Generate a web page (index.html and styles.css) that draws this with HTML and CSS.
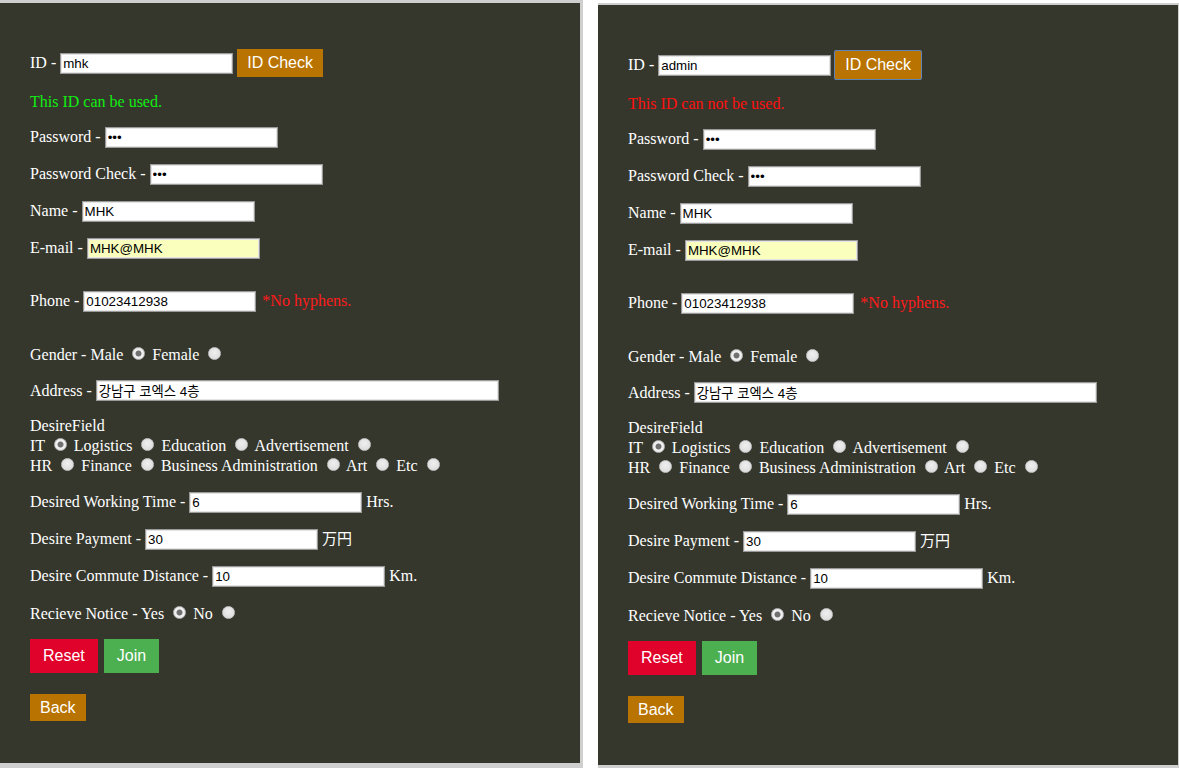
FILE: index.html
```html
<!DOCTYPE html>
<html lang="en">
<head>
<meta charset="utf-8">
<title>Join</title>
<link rel="stylesheet" href="styles.css">
</head>
<body>
<div class="screens">
  <section class="panel panel-left">
    <div class="row">ID - <input class="txt" type="text" value="mhk"> <button class="btn btn-amber btn-check">ID Check</button></div>
    <div class="row msg ok">This ID can be used.</div>
    <div class="row">Password - <input class="txt" type="password" value="abc"></div>
    <div class="row">Password Check - <input class="txt" type="password" value="abc"></div>
    <div class="row">Name - <input class="txt" type="text" value="MHK"></div>
    <div class="row">E-mail - <input class="txt auto" type="text" value="MHK@MHK"></div>
    <div class="row gap-phone">Phone - <input class="txt" type="text" value="01023412938"> <span class="note">*No hyphens.</span></div>
    <div class="row gap-gender">Gender - Male <input type="radio" name="g1" checked> Female <input type="radio" name="g1"></div>
    <div class="row">Address - <input class="txt wide" type="text" value="강남구 코엑스 4층"></div>
    <div class="row field">DesireField<br>IT <input type="radio" name="f1" checked> Logistics <input type="radio" name="f1"> Education <input type="radio" name="f1"> Advertisement <input type="radio" name="f1"><br>HR <input type="radio" name="f1"> Finance <input type="radio" name="f1"> Business Administration <input type="radio" name="f1"> Art <input type="radio" name="f1"> Etc <input type="radio" name="f1"></div>
    <div class="row work">Desired Working Time - <input class="txt" type="text" value="6"> Hrs.</div>
    <div class="row">Desire Payment - <input class="txt" type="text" value="30"> <span class="cjk">万円</span></div>
    <div class="row">Desire Commute Distance - <input class="txt" type="text" value="10"> Km.</div>
    <div class="row notice">Recieve Notice - Yes <input type="radio" name="n1" checked> No <input type="radio" name="n1"></div>
    <div class="row actions"><button class="btn btn-red">Reset</button><button class="btn btn-green">Join</button></div>
    <div class="row back-row"><button class="btn btn-amber btn-back">Back</button></div>
  </section>
  <section class="panel panel-right">
    <div class="row">ID - <input class="txt" type="text" value="admin"> <button class="btn btn-amber btn-check focused">ID Check</button></div>
    <div class="row msg bad">This ID can not be used.</div>
    <div class="row">Password - <input class="txt" type="password" value="abc"></div>
    <div class="row">Password Check - <input class="txt" type="password" value="abc"></div>
    <div class="row">Name - <input class="txt" type="text" value="MHK"></div>
    <div class="row">E-mail - <input class="txt auto" type="text" value="MHK@MHK"></div>
    <div class="row gap-phone">Phone - <input class="txt" type="text" value="01023412938"> <span class="note">*No hyphens.</span></div>
    <div class="row gap-gender">Gender - Male <input type="radio" name="g2" checked> Female <input type="radio" name="g2"></div>
    <div class="row">Address - <input class="txt wide" type="text" value="강남구 코엑스 4층"></div>
    <div class="row field">DesireField<br>IT <input type="radio" name="f2" checked> Logistics <input type="radio" name="f2"> Education <input type="radio" name="f2"> Advertisement <input type="radio" name="f2"><br>HR <input type="radio" name="f2"> Finance <input type="radio" name="f2"> Business Administration <input type="radio" name="f2"> Art <input type="radio" name="f2"> Etc <input type="radio" name="f2"></div>
    <div class="row work">Desired Working Time - <input class="txt" type="text" value="6"> Hrs.</div>
    <div class="row">Desire Payment - <input class="txt" type="text" value="30"> <span class="cjk">万円</span></div>
    <div class="row">Desire Commute Distance - <input class="txt" type="text" value="10"> Km.</div>
    <div class="row notice">Recieve Notice - Yes <input type="radio" name="n2" checked> No <input type="radio" name="n2"></div>
    <div class="row actions"><button class="btn btn-red">Reset</button><button class="btn btn-green">Join</button></div>
    <div class="row back-row"><button class="btn btn-amber btn-back">Back</button></div>
  </section>
</div>
</body>
</html>
```
FILE: styles.css
```css
html, body {
  margin: 0;
  padding: 0;
  background: #ffffff;
  overflow: hidden;
}

body {
  font-family: "Liberation Serif", "Times New Roman", serif;
  font-size: 16px;
  color: #ffffff;
}

.screens {
  display: flex;
  gap: 15px;
  height: 768px;
  align-items: flex-start;
}

.panel {
  box-sizing: border-box;
  background: #35372d;
  padding: 30px 30px 0 30px;
  flex: none;
}

.panel-left {
  width: 583px;
  height: 768px;
  border-top: 3px solid #cfcfcf;
  border-right: 3px solid #cfcfcf;
  border-bottom: 5px solid #cfcfcf;
}

.panel-right {
  width: 581px;
  height: 765px;
  margin-top: 3px;
  border-top: 2px solid #cfcfcf;
  border-right: 1px solid #cfcfcf;
  border-bottom: 3px solid #cfcfcf;
}

.row {
  margin: 16px 0;
}

.gap-phone {
  margin-top: 32px;
}

.gap-gender {
  margin-top: 32px;
}

.field {
  margin-top: 15px;
}

.work {
  margin-top: 17px;
}

.notice {
  margin-top: 14px;
}

.msg.ok { color: #10ee10; }
.msg.bad { color: #ff1010; }

.note {
  color: #ff1a1a;
  margin-left: 2px;
}

.cjk {
  font-family: "Noto Sans CJK JP", sans-serif;
  font-size: 15px;
  line-height: 1;
}

.txt {
  box-sizing: border-box;
  width: 173px;
  height: 21px;
  padding: 1px 2px;
  margin: 0;
  border: 1px solid #9a9a9a;
  box-shadow: inset 0 0 0 1px #e4e4e4;
  background: #ffffff;
  color: #000000;
  font-family: "Liberation Sans", Arial, "Noto Sans CJK KR", sans-serif;
  font-size: 13.33px;
  vertical-align: baseline;
}

.txt.auto {
  background: #faffbd;
}

.txt.wide {
  width: 403px;
}

input[type="radio"] {
  appearance: none;
  -webkit-appearance: none;
  box-sizing: border-box;
  width: 13px;
  height: 13px;
  margin: 3px 3px 0 5px;
  border-radius: 50%;
  border: 1px solid #c6c6c6;
  background: radial-gradient(circle at 50% 40%, #efefef 0, #d8d8d8 100%);
}

input[type="radio"]:checked {
  background: radial-gradient(circle, #707070 0, #707070 2.6px, #f2f2f2 3.4px, #e2e2e2 100%);
  border-color: #b8b8b8;
}

.btn {
  font-family: "Liberation Sans", Arial, sans-serif;
  font-size: 16px;
  color: #ffffff;
  border: none;
  margin: 0;
  cursor: pointer;
  vertical-align: baseline;
}

.btn-amber { background: #b87300; }
.btn-red { background: #e0022a; }
.btn-green { background: #4caf50; }

.btn-check {
  height: 28px;
  padding: 0 10px;
}

.btn-check.focused {
  box-shadow: 0 0 0 1px #5d83b8;
  border-radius: 1px;
}

.actions {
  display: flex;
  gap: 6px;
  margin-top: 16px;
}

.btn-red,
.btn-green {
  height: 34px;
  padding: 0 13px;
}

.back-row {
  margin-top: 21px;
  display: flex;
}

.btn-back {
  height: 27px;
  padding: 0 10px;
}
```
